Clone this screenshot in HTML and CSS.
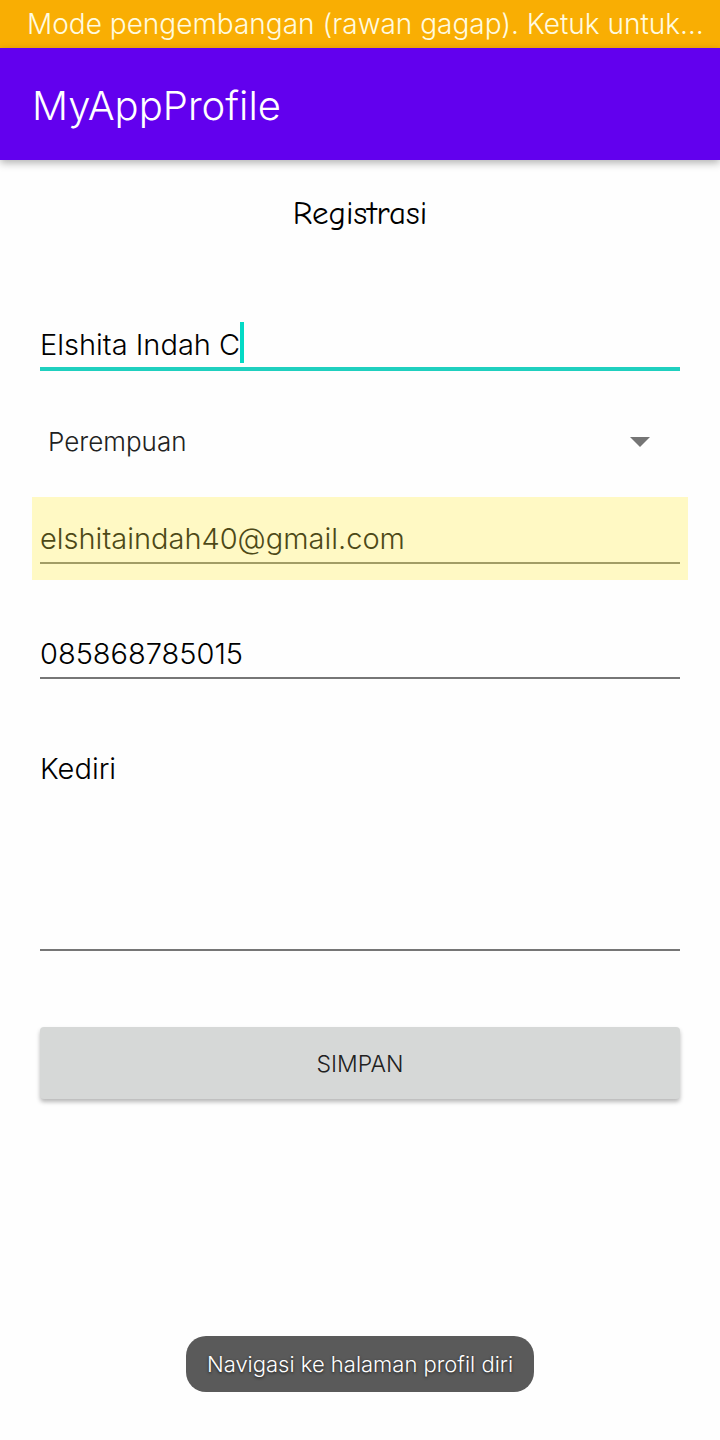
FILE: index.html
```html
<!DOCTYPE html>
<html lang="id">
<head>
<meta charset="utf-8">
<meta name="viewport" content="width=device-width, initial-scale=1">
<title>MyAppProfile</title>
<link rel="stylesheet" href="styles.css">
</head>
<body>
<div class="status">Mode pengembangan (rawan gagap). Ketuk untuk…</div>
<header class="app-bar"><h1 class="app-title">MyAppProfile</h1></header>
<main class="content">
  <h2 class="heading">Registrasi</h2>
  <form class="form">
    <div class="field">
      <input class="input input-name" type="text" aria-label="Nama" value="Elshita Indah C">
      <span class="caret"></span>
    </div>
    <div class="select-wrap">
      <select class="select" aria-label="Jenis kelamin"><option>Perempuan</option><option>Laki-laki</option></select>
      <svg class="arrow" viewBox="0 0 20 10" aria-hidden="true"><path d="M0 0h20L10 10z"/></svg>
    </div>
    <div class="autofill"><input class="input input-email" type="email" aria-label="Email" value="elshitaindah40@gmail.com"></div>
    <div class="field"><input class="input" type="tel" aria-label="Telepon" value="085868785015"></div>
    <div class="field"><textarea class="input area" aria-label="Alamat">Kediri</textarea></div>
    <button class="save" type="button">SIMPAN</button>
  </form>
</main>
<div class="toast" role="status">Navigasi ke halaman profil diri</div>
</body>
</html>
```
FILE: styles.css
```css
* { box-sizing: border-box; }
body {
  margin: 0;
  min-height: 100vh;
  display: flex;
  flex-direction: column;
  background: #fefefe;
  color: #000;
  font-family: Inter, Roboto, sans-serif;
  font-weight: 300;
}
.status {
  padding: 1px 8px 0 27px;
  background: #f9ae03;
  color: #fffbe0;
  font-size: 28px;
  line-height: 47px;
  white-space: nowrap;
}
.app-bar {
  height: 112px;
  padding: 2px 32px 0;
  display: flex;
  align-items: center;
  background: #6200ee;
  color: #fff;
  box-shadow: 0 3px 8px rgba(0, 0, 0, 0.3);
}
.app-title { margin: 0; font-size: 40px; font-weight: 300; }
.content { flex: 1; padding: 32px; }
.heading {
  margin: 0 0 73px;
  font-family: "Comic Neue", "Comic Sans MS", Lato, cursive;
  font-size: 33px;
  font-weight: 400;
  line-height: 42px;
  text-align: center;
}
.form { display: flex; flex-direction: column; }
.field { position: relative; padding: 0 8px; }
.input {
  display: block;
  width: 100%;
  height: 64px;
  margin: 0;
  padding: 20px 0 6px;
  border: 0;
  border-bottom: 2px solid #767676;
  border-radius: 0;
  outline: 0;
  background: transparent;
  color: #000;
  font: inherit;
  font-size: 29px;
  line-height: 36px;
}
.input-name { border-bottom: 4px solid #1fd0bf; }
.caret {
  position: absolute;
  left: 208px;
  top: 15px;
  width: 4px;
  height: 41px;
  background: #03dac5;
}
.select-wrap { position: relative; margin: 46px 0 32px; }
.select {
  display: block;
  width: 100%;
  height: 48px;
  padding: 0 16px;
  border: 0;
  appearance: none;
  background: transparent;
  color: #212121;
  font: inherit;
  font-size: 26px;
}
.arrow { position: absolute; right: 38px; top: 20px; width: 20px; height: 10px; fill: #757575; }
.autofill { height: 83px; margin-bottom: 35px; padding: 3px 8px 0; background: #fff9c4; }
.input-email { border-bottom-color: #a29d65; color: #4d4917; }
.area { height: 220px; margin-top: 52px; resize: none; }
.save {
  height: 72px;
  margin: 76px 8px 0;
  padding: 2px 0 0;
  border: 0;
  border-radius: 4px;
  background: #d6d8d7;
  color: #212121;
  box-shadow: 0 3px 4px rgba(0, 0, 0, 0.28);
  font: inherit;
  font-size: 23px;
}
.toast {
  align-self: center;
  margin-bottom: 48px;
  padding: 0 21px;
  border-radius: 20px;
  background: #5a5a5a;
  color: #fff;
  font-size: 22px;
  line-height: 56px;
  text-shadow: 0 1px 3px rgba(0, 0, 0, 0.7);
}
```
